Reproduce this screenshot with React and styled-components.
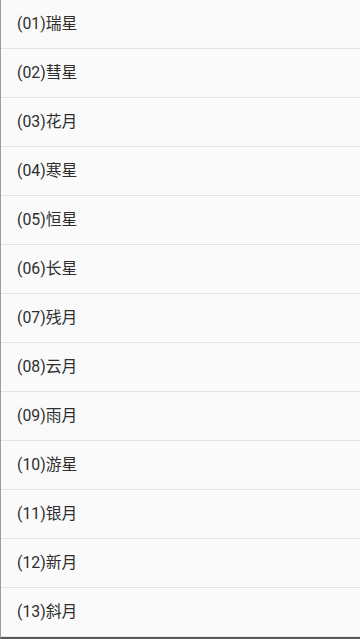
import styled, { createGlobalStyle } from "styled-components";

const GlobalStyle = createGlobalStyle`
  html, body {
    margin: 0;
    padding: 0;
    background: #fafafa;
  }
`;

const Screen = styled.div`
  width: 360px;
  height: 639px;
  box-sizing: border-box;
  background: #fafafa;
  border-left: 1px solid #9e9e9e;
  border-bottom: 2px solid #5a5a5a;
  overflow: hidden;
`;

const List = styled.ul`
  list-style: none;
  margin: 0;
  padding: 0;
`;

const Row = styled.li`
  height: 49px;
  box-sizing: border-box;
  display: flex;
  align-items: center;
  padding: 0 0 3px 16px;
  border-bottom: 1px solid #e2e2e2;
  font-family: Roboto, "Noto Sans CJK SC", sans-serif;
  font-size: 15.8px;
  color: #2e2e2e;
`;

const items = [
  "瑞星",
  "彗星",
  "花月",
  "寒星",
  "恒星",
  "长星",
  "残月",
  "云月",
  "雨月",
  "游星",
  "银月",
  "新月",
  "斜月",
];

const App = () => {
  return (
    <>
      <GlobalStyle />
      <Screen>
        <List>
          {items.map((name, i) => (
            <Row key={name}>
              ({String(i + 1).padStart(2, "0")}){name}
            </Row>
          ))}
        </List>
      </Screen>
    </>
  );
};

export default App;
